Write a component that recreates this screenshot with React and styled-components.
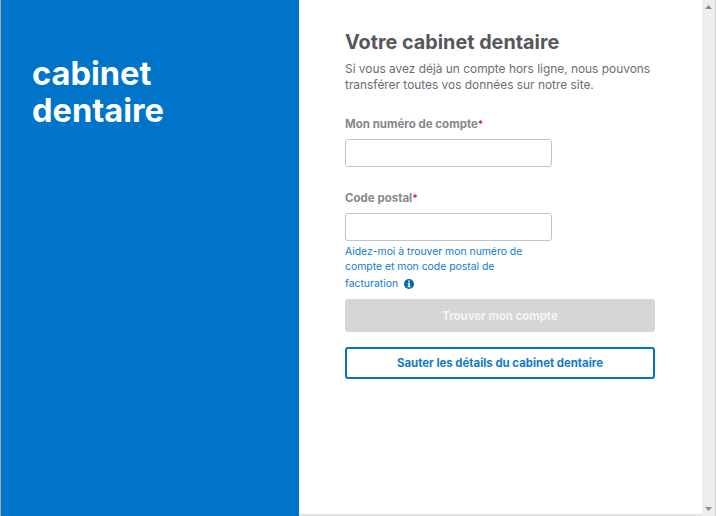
import React from 'react'
import styled, { createGlobalStyle } from 'styled-components'

const GlobalStyle = createGlobalStyle`
  html, body {
    margin: 0;
    padding: 0;
    height: 100%;
    overflow: hidden;
    background: #fff;
    font-family: Inter, "Liberation Sans", sans-serif;
  }
  * {
    box-sizing: border-box;
  }
`

const Shell = styled.div`
  display: flex;
  width: 716px;
  height: 516px;
  border-left: 1px solid #a9a9a9;
  border-right: 1px solid #cfcfcf;
`

const Sidebar = styled.aside`
  width: 298px;
  flex-shrink: 0;
  padding: 55px 31px 0;
  background: #0074c8;
`

const SidebarTitle = styled.h1`
  margin: 0;
  color: #fff;
  font-size: 32.6px;
  font-weight: 700;
  line-height: 37px;
`

const Main = styled.main`
  flex: 1;
  padding: 31px 47px 0 46px;
  border-bottom: 2px solid #e3e3e3;
`

const Title = styled.h2`
  margin: 0 0 8px;
  color: #55575b;
  font-size: 19.8px;
  font-weight: 700;
  line-height: 22px;
`

const Intro = styled.p`
  margin: 0 0 23px;
  color: #6b6e72;
  font-size: 11.9px;
  line-height: 16px;
  white-space: nowrap;
`

const Field = styled.div`
  margin-bottom: ${(p) => p.$gap}px;
`

const Label = styled.label`
  display: block;
  margin-bottom: 7px;
  color: #85888d;
  font-size: 11.5px;
  font-weight: 700;
  line-height: 16px;
`

const Required = styled.span`
  color: #e8114b;
  font-size: 10px;
`

const Input = styled.input`
  display: block;
  width: 207px;
  height: 28px;
  border: 1px solid #c4c4c4;
  border-radius: 3px;
  background: #fff;
`

const HelpLink = styled.a`
  display: block;
  width: 190px;
  margin-bottom: 8px;
  color: #0f7ccc;
  font-size: 10.4px;
  line-height: 15px;
`

const HelpLastLine = styled.span`
  display: flex;
  align-items: center;
  gap: 6px;
  margin-top: 2px;
`

const InfoIcon = styled.svg`
  width: 10px;
  height: 10px;
  color: #0067b1;
`

const Button = styled.button`
  display: block;
  width: 310px;
  font-family: inherit;
  font-size: 11.4px;
  font-weight: 700;
  border-radius: 3px;
  padding: 0;
`

const DisabledButton = styled(Button)`
  height: 33px;
  margin-bottom: 15px;
  border: none;
  background: #d6d6d6;
  color: #f4f4f4;
`

const OutlineButton = styled(Button)`
  height: 32px;
  border: 2px solid #0074c8;
  background: #fff;
  color: #0f7ccc;
`

const Scrollbar = styled.div`
  display: flex;
  flex-direction: column;
  justify-content: space-between;
  align-items: center;
  width: 13px;
  flex-shrink: 0;
  padding: 5px 0;
  background: #eeeeee;
`

const Arrow = styled.svg`
  width: 7px;
  height: 4px;
  fill: #8a8a8a;
`

export default function App() {
  return (
    <>
      <GlobalStyle />
      <Shell>
        <Sidebar>
          <SidebarTitle>
            cabinet
            <br />
            dentaire
          </SidebarTitle>
        </Sidebar>
        <Main>
          <Title>Votre cabinet dentaire</Title>
          <Intro>
            Si vous avez déjà un compte hors ligne, nous pouvons
            <br />
            transférer toutes vos données sur notre site.
          </Intro>
          <Field $gap={23}>
            <Label>
              Mon numéro de compte<Required>*</Required>
            </Label>
            <Input />
          </Field>
          <Field $gap={3}>
            <Label>
              Code postal<Required>*</Required>
            </Label>
            <Input />
          </Field>
          <HelpLink>
            Aidez-moi à trouver mon numéro de compte et mon code postal de
            <HelpLastLine>
              facturation
              <InfoIcon viewBox="0 0 10 10">
                <circle cx="5" cy="5" r="5" fill="currentColor" />
                <rect x="4.2" y="1.6" width="1.7" height="1.6" fill="#fff" />
                <path d="M3.7 4h2.2v3.3h.7v1H3.6v-1h.7V5h-.6z" fill="#fff" />
              </InfoIcon>
            </HelpLastLine>
          </HelpLink>
          <DisabledButton disabled>Trouver mon compte</DisabledButton>
          <OutlineButton>Sauter les détails du cabinet dentaire</OutlineButton>
        </Main>
        <Scrollbar>
          <Arrow viewBox="0 0 7 4">
            <path d="M3.5 0L7 4H0z" />
          </Arrow>
          <Arrow viewBox="0 0 7 4">
            <path d="M0 0h7L3.5 4z" />
          </Arrow>
        </Scrollbar>
      </Shell>
    </>
  )
}
